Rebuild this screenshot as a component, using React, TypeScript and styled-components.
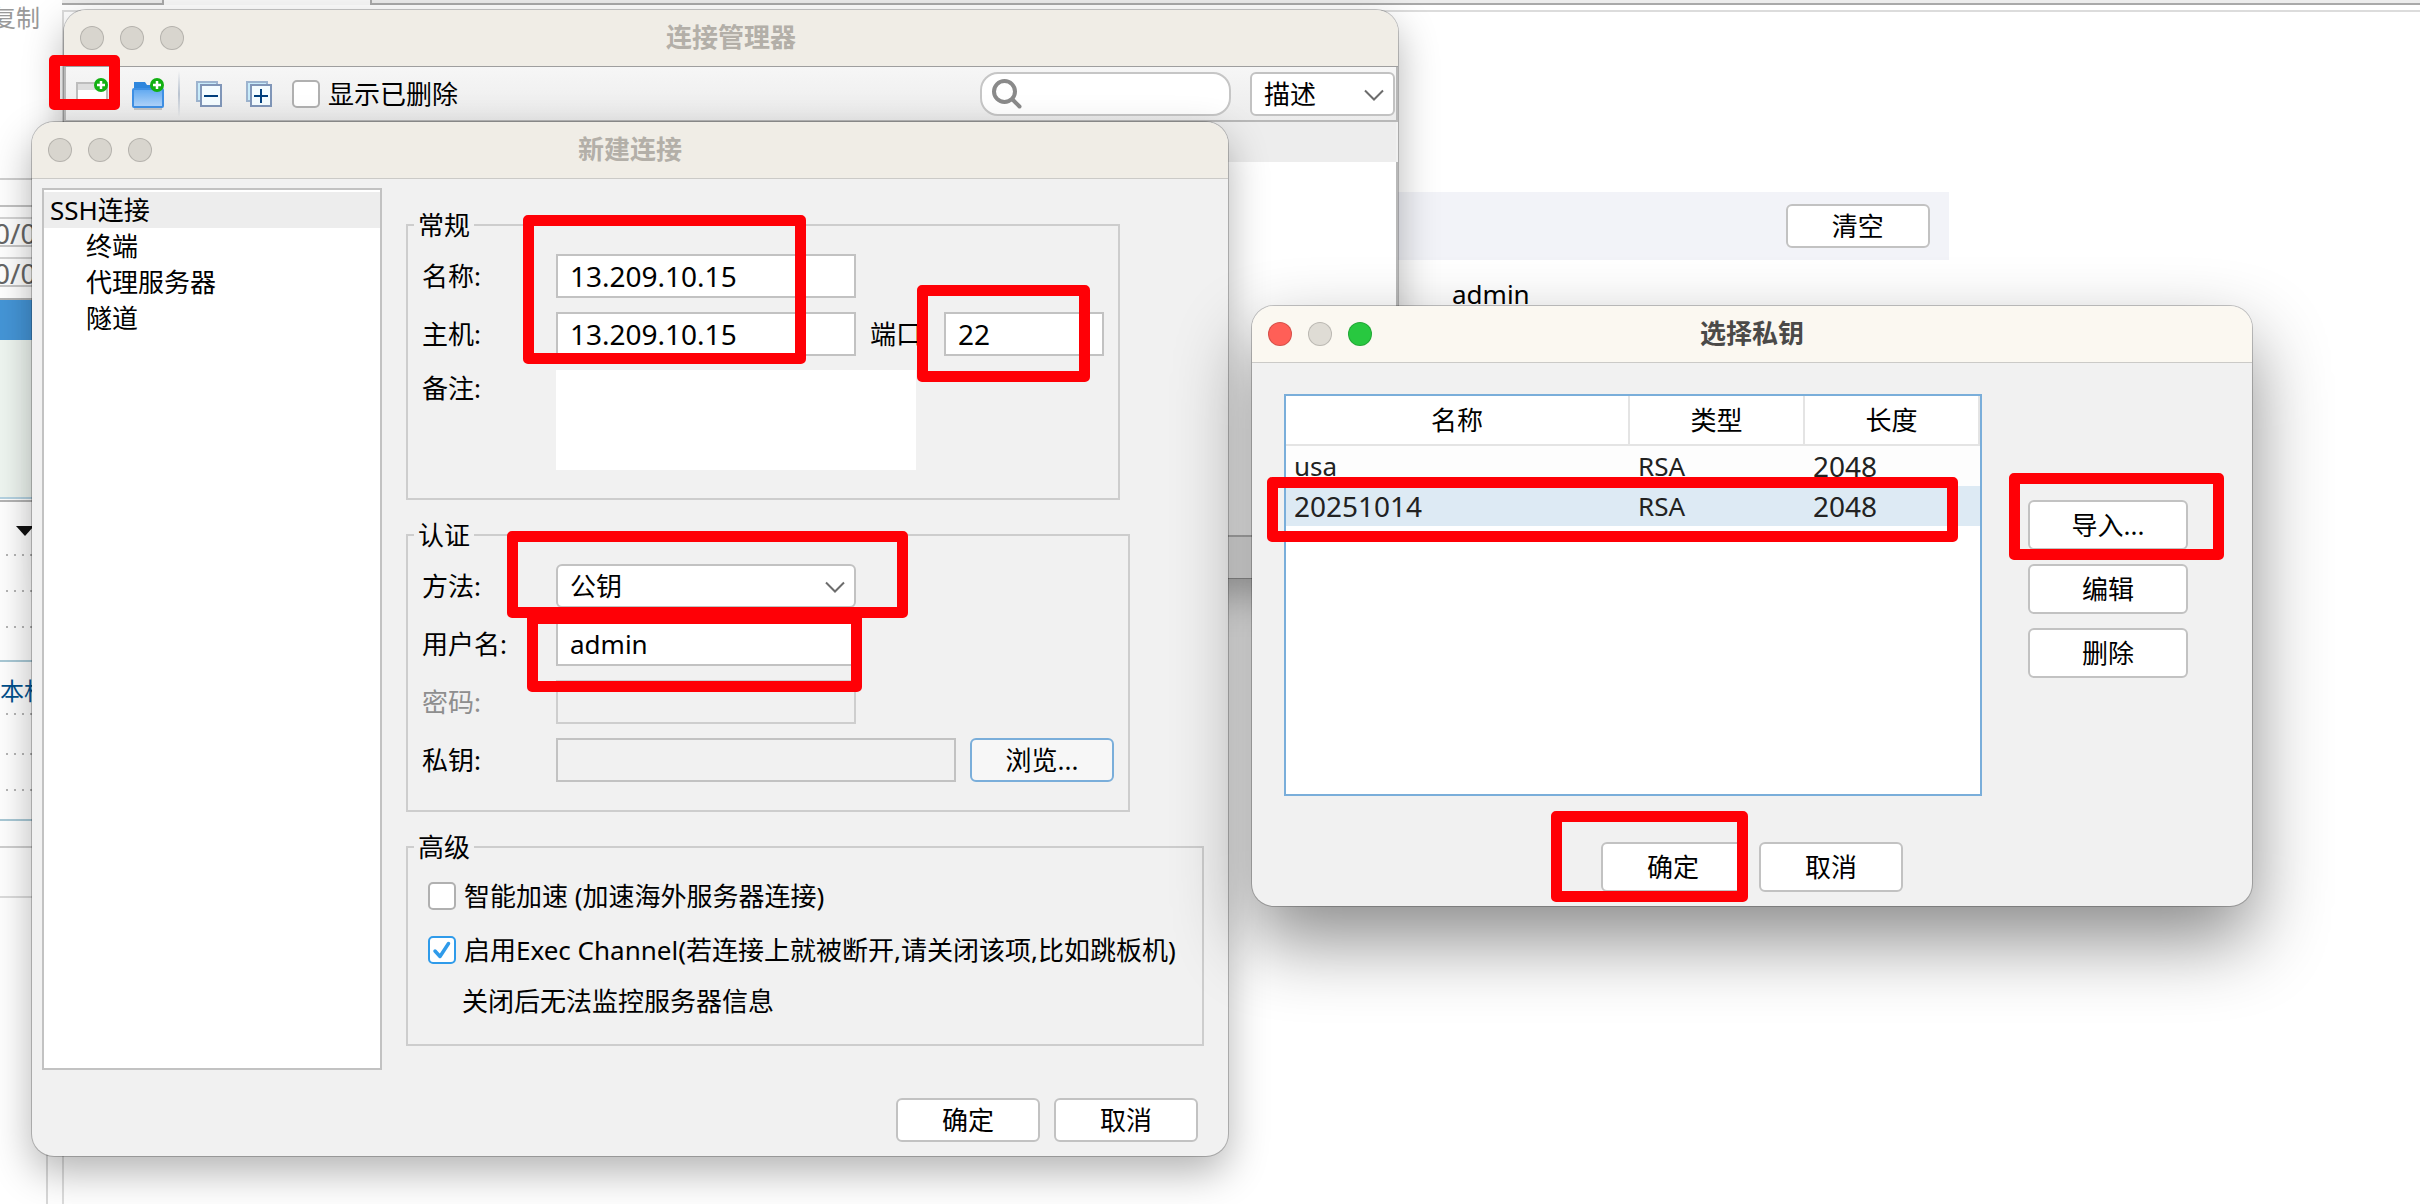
import React, { useId } from 'react';
import styled, { createGlobalStyle, css } from 'styled-components';

const GlobalStyle = createGlobalStyle`
  *, *::before, *::after { box-sizing: border-box; }
  body {
    margin: 0;
    background: #fff;
    color: #000;
    font: 26px/36px "Noto Sans", "Noto Sans CJK SC", sans-serif;
  }
  button, input, select, textarea { font: inherit; color: inherit; margin: 0; }
`;

/* ---------- desktop and the main application behind the dialogs ---------- */

const Desktop = styled.div`
  position: relative;
  display: flex;
  min-height: 100vh;
  overflow: hidden;
`;

const Sidebar = styled.aside`
  display: flex;
  flex-direction: column;
  flex: 0 0 62px;
  overflow: hidden;
  white-space: nowrap;
`;

const CopyLabel = styled.div`
  height: 178px;
  display: flex;
  justify-content: flex-end;
  padding-right: 22px;
  font-size: 24px;
  color: #999;
`;

const Strip = styled.div<{ $h: number; $line?: string; $bg?: string }>`
  flex: none;
  height: ${(p) => p.$h}px;
  background: ${(p) => p.$bg ?? 'transparent'};
  border-bottom: 2px solid ${(p) => p.$line ?? 'transparent'};
`;

const Metric = styled(Strip)`
  font-size: 28px;
  line-height: 28px;
  color: #666;
  text-indent: -6px;
`;

const Dots = styled.div<{ $h: number }>`
  flex: none;
  height: ${(p) => p.$h}px;
  margin-left: 6px;
  background: repeating-linear-gradient(90deg, #b5b5b5 0 2px, transparent 2px 8px) bottom / 100% 2px
    no-repeat;
`;

const Group = styled.div`
  flex: none;
  height: 34px;
  margin-top: 12px;
  line-height: 34px;
  color: #00508c;
  font-size: 24px;
`;

const SplitLine = styled.div`
  flex: 1;
  width: 48px;
  border-right: 2px solid #d8d8d8;
`;

const Main = styled.main`
  display: flex;
  flex-direction: column;
  flex: 1;
  min-width: 0;
`;

const TabStrip = styled.div`
  display: flex;
  height: 5px;
`;

const TabEdge = styled.div<{ $active?: boolean; $w?: number }>`
  flex: ${(p) => (p.$w ? `0 0 ${p.$w}px` : '1')};
  ${(p) =>
    p.$active
      ? css`
          border: solid #a9a9a9;
          border-width: 0 2px;
          background: #f8f8f8;
        `
      : css`
          border-bottom: 2px solid #a9a9a9;
          background: #ececec;
        `}
`;

const Workspace = styled.div`
  flex: 1;
  margin-top: 5px;
  border: solid #dcdcdc;
  border-width: 2px 0 0 2px;
`;

const ResultBar = styled.div`
  display: flex;
  justify-content: flex-end;
  width: 80%;
  margin-top: 180px;
  padding: 12px 19px;
  background: #f2f3f8;
`;

const ResultRow = styled.div`
  padding: 16px 0 0 1388px;
`;

/* ---------- windows ---------- */

const Window = styled.section<{ $x: number; $y: number; $w: number; $active?: boolean }>`
  position: absolute;
  left: ${(p) => p.$x}px;
  top: ${(p) => p.$y}px;
  width: ${(p) => p.$w}px;
  display: flex;
  flex-direction: column;
  overflow: hidden;
  border-radius: 22px;
  background: #f1f1f1;
  box-shadow: ${(p) =>
    p.$active
      ? '0 0 0 1px rgba(0,0,0,.22), 0 34px 76px rgba(0,0,0,.46)'
      : '0 0 0 1px rgba(0,0,0,.22), 0 16px 40px rgba(0,0,0,.3)'};
`;

const Bar = styled.header<{ $active?: boolean; $strong?: boolean }>`
  display: grid;
  grid-template-columns: 1fr auto 1fr;
  align-items: center;
  height: 57px;
  padding: 0 16px;
  background: ${(p) => (p.$active ? '#fbf8f1' : '#f0ede6')};
  border-bottom: 1px solid ${(p) => (p.$strong ? '#9e9e9e' : '#cbcac7')};
`;

const Title = styled.h2<{ $active?: boolean }>`
  margin: 0;
  padding-bottom: 2px;
  font-size: 26px;
  line-height: 36px;
  font-weight: 700;
  color: ${(p) => (p.$active ? '#4b4a48' : '#b3afa8')};
`;

const Lights = styled.div`
  display: flex;
  gap: 16px;
`;

const Light = styled.button<{ $color: string }>`
  width: 24px;
  height: 24px;
  padding: 0;
  border: 1px solid rgba(0, 0, 0, 0.16);
  border-radius: 50%;
  background: ${(p) => p.$color};
`;

function TitleBar({ title, active, strong }: { title: string; active?: boolean; strong?: boolean }) {
  const colors = active ? ['#ff5f57', '#dfdcd5', '#28c840'] : ['#d8d5ce', '#d8d5ce', '#d8d5ce'];
  const names = ['关闭', '最小化', '缩放'];
  return (
    <Bar $active={active} $strong={strong}>
      <Lights>
        {colors.map((c, i) => (
          <Light key={names[i]} type="button" aria-label={names[i]} $color={c} />
        ))}
      </Lights>
      <Title $active={active}>{title}</Title>
    </Bar>
  );
}

/* ---------- shared controls ---------- */

const Button = styled.button<{ $tall?: boolean; $w?: number; $focus?: boolean }>`
  flex: none;
  width: ${(p) => p.$w ?? 144}px;
  height: ${(p) => (p.$tall ? 50 : 44)}px;
  padding: 0;
  line-height: 36px;
  border: 2px solid ${(p) => (p.$focus ? '#7aaeda' : '#c2c2c2')};
  border-radius: 6px;
  background: ${(p) => (p.$focus ? '#f7f7f7' : '#fff')};
`;

const field = css`
  height: 44px;
  padding: 0 12px;
  border: 2px solid #c2c2c2;
  background: #fff;
  outline: none;
`;

const TextField = styled.input<{ $w: number }>`
  ${field}
  width: ${(p) => p.$w}px;
  &:read-only { background: #f1f1f1; }
  &:disabled { background: #f1f1f1; border-color: #cecece; }
`;

const NumericField = styled(TextField)`
  font-size: 28px;
`;

const Notes = styled.textarea`
  display: block;
  width: 360px;
  height: 100px;
  padding: 4px 12px;
  border: 0;
  resize: none;
  background: #fff;
`;

const SelectWrap = styled.span<{ $w: number }>`
  position: relative;
  display: block;
  flex: none;
  width: ${(p) => p.$w}px;
  height: 44px;
`;

const SelectBox = styled.select`
  ${field}
  appearance: none;
  width: 100%;
  border-radius: 6px;
`;

const Chevron = styled.svg`
  position: absolute;
  right: 11px;
  top: 17px;
  pointer-events: none;
`;

function Select({ id, value, width, label }: { id?: string; value: string; width: number; label?: string }) {
  return (
    <SelectWrap $w={width}>
      <SelectBox id={id} aria-label={label} defaultValue={value}>
        <option>{value}</option>
      </SelectBox>
      <Chevron width="20" height="12" viewBox="0 0 20 12" aria-hidden>
        <path d="M1 1.5l9 9 9-9" fill="none" stroke="#6c6c6c" strokeWidth="2" />
      </Chevron>
    </SelectWrap>
  );
}

const CheckLabel = styled.label`
  display: flex;
  align-items: center;
  gap: 8px;
  height: 28px;
  line-height: 28px;
  white-space: nowrap;
`;

const CheckSlot = styled.span`
  display: grid;
  flex: none;
  width: 28px;
  height: 28px;
  > * { grid-area: 1 / 1; }
  svg { pointer-events: none; }
`;

const CheckInput = styled.input`
  appearance: none;
  width: 28px;
  height: 28px;
  border: 2px solid #b0b0b0;
  border-radius: 5px;
  background: #fff;
  &:checked { border-color: #2f9bea; }
  & + svg { visibility: hidden; }
  &:checked + svg { visibility: visible; }
`;

function Check({ text, checked }: { text: string; checked?: boolean }) {
  return (
    <CheckLabel>
      <CheckSlot>
        <CheckInput type="checkbox" defaultChecked={checked} />
        <svg width="28" height="28" viewBox="0 0 28 28" aria-hidden>
          <path
            d="M7 15l5 5.5L20.5 7.5"
            fill="none"
            stroke="#2f9bea"
            strokeWidth="3.5"
            strokeLinecap="round"
            strokeLinejoin="round"
          />
        </svg>
      </CheckSlot>
      {text}
    </CheckLabel>
  );
}

/* ---------- connection manager ---------- */

const Toolbar = styled.div`
  display: flex;
  align-items: center;
  height: 55px;
  padding: 0 1px 0 10px;
  border: solid #b8b8b8;
  border-width: 0 2px 2px;
  background: linear-gradient(#f6f6f6, #ececec);
`;

const IconButton = styled.button<{ $gap: number }>`
  display: flex;
  flex: none;
  margin-right: ${(p) => p.$gap}px;
  padding: 0;
  border: 0;
  background: none;
`;

const Divider = styled.span`
  width: 2px;
  height: 46px;
  margin-right: 16px;
  background: linear-gradient(transparent, #b9c3d0, transparent);
`;

const SearchBox = styled.label`
  display: flex;
  align-items: center;
  width: 251px;
  height: 44px;
  margin: 0 19px 0 auto;
  padding: 0 12px 0 10px;
  border: 2px solid #c6c6c6;
  border-radius: 18px;
  background: #fff;
`;

const SearchInput = styled.input.attrs({ type: 'text' })`
  flex: 1;
  min-width: 0;
  border: 0;
  outline: none;
  background: none;
`;

const ManagerHead = styled.div`
  height: 40px;
  margin: 0 2px;
  background: #ededed;
`;

const ManagerList = styled.div`
  min-height: 375px;
  border: solid #b8b8b8;
  border-width: 0 2px 2px;
  background: #fff;
`;

const ManagerFoot = styled.div`
  height: 41px;
`;

const PlusBadge = () => (
  <>
    <circle cx="25" cy="7" r="7" fill="#12b012" />
    <path d="M25 3v8M21 7h8" stroke="#fff" strokeWidth="2.5" />
  </>
);

const NewIcon = () => (
  <svg width="32" height="32" viewBox="0 0 32 32" aria-hidden>
    <rect x="1" y="5" width="30" height="24" fill="#fff" stroke="#bdbdbd" strokeWidth="2" />
    <rect x="2" y="6" width="28" height="6" fill="#dedede" />
    <PlusBadge />
  </svg>
);

const FolderIcon = () => (
  <svg width="32" height="32" viewBox="0 0 32 32" aria-hidden>
    <defs>
      <linearGradient id="folder" x1="0" y1="0" x2="0" y2="1">
        <stop offset="0" stopColor="#5fa8f0" />
        <stop offset="1" stopColor="#b4d6fb" />
      </linearGradient>
    </defs>
    <rect x="2" y="29" width="28" height="3" fill="#c4c4c4" />
    <path d="M2 12V4h11l2 3h15v5z" fill="#2f86dd" />
    <rect x="1" y="11" width="30" height="18" rx="1" fill="url(#folder)" stroke="#3f90e4" strokeWidth="2" />
    <PlusBadge />
  </svg>
);

const TreeIcon = ({ plus }: { plus?: boolean }) => (
  <svg width="26" height="26" viewBox="0 0 26 26" aria-hidden>
    <rect x="1" y="1" width="20" height="19" fill="#c8ecfb" stroke="#9db4cf" strokeWidth="2" />
    <rect x="5" y="4" width="20" height="21" fill="#f4fcff" stroke="#8096b8" strokeWidth="2" />
    <path d={plus ? 'M8 15h14M15 8v14' : 'M8 15h14'} stroke="#003f7d" strokeWidth="2" />
  </svg>
);

const SearchIcon = () => (
  <svg width="30" height="30" viewBox="0 0 30 30" aria-hidden>
    <circle cx="12.5" cy="12.5" r="10.5" fill="none" stroke="#8a8a8a" strokeWidth="4" />
    <path d="M20.5 20.5l7 7" stroke="#8a8a8a" strokeWidth="4" strokeLinecap="round" />
  </svg>
);

function ManagerWindow() {
  return (
    <Window $x={64} $y={10} $w={1334}>
      <TitleBar title="连接管理器" strong />
      <Toolbar>
        <IconButton type="button" aria-label="新建连接" $gap={24}><NewIcon /></IconButton>
        <IconButton type="button" aria-label="新建文件夹" $gap={14}><FolderIcon /></IconButton>
        <Divider />
        <IconButton type="button" aria-label="全部折叠" $gap={24}><TreeIcon /></IconButton>
        <IconButton type="button" aria-label="全部展开" $gap={20}><TreeIcon plus /></IconButton>
        <Check text="显示已删除" />
        <SearchBox>
          <SearchIcon />
          <SearchInput aria-label="搜索" />
        </SearchBox>
        <Select value="描述" width={145} label="搜索范围" />
      </Toolbar>
      <ManagerHead />
      <ManagerList />
      <ManagerFoot />
    </Window>
  );
}

/* ---------- new connection ---------- */

const DialogBody = styled.div`
  display: flex;
  gap: 24px;
  padding: 9px 24px 0 10px;
`;

const Nav = styled.ul`
  flex: 0 0 340px;
  margin: 0;
  padding: 2px 0 0;
  list-style: none;
  border: 2px solid #c2c2c2;
  background: #fff;
`;

const NavItem = styled.li<{ $child?: boolean }>`
  height: 36px;
  padding-left: ${(p) => (p.$child ? 42 : 6)}px;
  background: ${(p) => (p.$child ? 'transparent' : '#ededed')};
`;

const Form = styled.form`
  display: flex;
  flex: 1;
  flex-direction: column;
  align-items: flex-start;
  gap: 17px;
  padding: 19px 0 24px;
`;

const Fieldset = styled.fieldset<{ $wide?: boolean }>`
  min-width: 0;
  margin: 0;
  padding: ${(p) => (p.$wide ? '17px 14px 32px' : '11px 14px 28px')};
  align-self: ${(p) => (p.$wide ? 'stretch' : 'flex-start')};
  border: 2px solid #cdcdcd;
`;

const Legend = styled.legend`
  margin-left: -8px;
  padding: 0 4px;
`;

const Rows = styled.div<{ $gap: number; $indent?: number }>`
  display: flex;
  flex-direction: column;
  gap: ${(p) => p.$gap}px;
  padding-left: ${(p) => p.$indent ?? 0}px;
`;

const Row = styled.div<{ $top?: boolean }>`
  display: flex;
  align-items: ${(p) => (p.$top ? 'flex-start' : 'center')};
`;

const Label = styled.label<{ $muted?: boolean }>`
  flex: 0 0 134px;
  color: ${(p) => (p.$muted ? '#8e8e8e' : 'inherit')};
`;

const PortLabel = styled.label`
  flex: 0 0 74px;
  margin-left: 14px;
`;

const Browse = styled(Button)`
  margin-left: 14px;
`;

const Hint = styled.p`
  margin: 0 0 0 34px;
  line-height: 22px;
`;

const Footer = styled.footer<{ $center?: boolean }>`
  display: flex;
  gap: 14px;
  justify-content: ${(p) => (p.$center ? 'center' : 'flex-end')};
  padding: ${(p) => (p.$center ? '46px 0 14px' : '28px 30px 14px')};
`;

function NewConnectionWindow() {
  const id = useId();
  return (
    <Window $x={32} $y={122} $w={1196}>
      <TitleBar title="新建连接" />
      <DialogBody>
        <Nav>
          <NavItem>SSH连接</NavItem>
          <NavItem $child>终端</NavItem>
          <NavItem $child>代理服务器</NavItem>
          <NavItem $child>隧道</NavItem>
        </Nav>
        <Form>
          <Fieldset>
            <Legend>常规</Legend>
            <Rows $gap={14}>
              <Row>
                <Label htmlFor={id + 'name'}>名称:</Label>
                <NumericField id={id + 'name'} $w={300} defaultValue="13.209.10.15" />
              </Row>
              <Row>
                <Label htmlFor={id + 'host'}>主机:</Label>
                <NumericField id={id + 'host'} $w={300} defaultValue="13.209.10.15" />
                <PortLabel htmlFor={id + 'port'}>端口:</PortLabel>
                <NumericField id={id + 'port'} $w={160} defaultValue="22" />
              </Row>
              <Row $top>
                <Label htmlFor={id + 'notes'}>备注:</Label>
                <Notes id={id + 'notes'} />
              </Row>
            </Rows>
          </Fieldset>
          <Fieldset>
            <Legend>认证</Legend>
            <Rows $gap={14}>
              <Row>
                <Label htmlFor={id + 'method'}>方法:</Label>
                <Select id={id + 'method'} value="公钥" width={300} />
              </Row>
              <Row>
                <Label htmlFor={id + 'user'}>用户名:</Label>
                <TextField id={id + 'user'} $w={300} defaultValue="admin" />
              </Row>
              <Row>
                <Label htmlFor={id + 'pass'} $muted>密码:</Label>
                <TextField id={id + 'pass'} type="password" $w={300} disabled />
              </Row>
              <Row>
                <Label htmlFor={id + 'key'}>私钥:</Label>
                <TextField id={id + 'key'} $w={400} readOnly />
                <Browse type="button" $focus>浏览...</Browse>
              </Row>
            </Rows>
          </Fieldset>
          <Fieldset $wide>
            <Legend>高级</Legend>
            <Rows $gap={26} $indent={6}>
              <Check text="智能加速 (加速海外服务器连接)" />
              <Check text="启用Exec Channel(若连接上就被断开,请关闭该项,比如跳板机)" checked />
              <Hint>关闭后无法监控服务器信息</Hint>
            </Rows>
          </Fieldset>
        </Form>
      </DialogBody>
      <Footer>
        <Button type="button">确定</Button>
        <Button type="button">取消</Button>
      </Footer>
    </Window>
  );
}

/* ---------- private key picker ---------- */

const KeyBody = styled.div`
  display: flex;
  gap: 46px;
  padding: 31px 64px 0 32px;
`;

const KeyPane = styled.div`
  flex: 1;
  min-height: 402px;
  border: 2px solid #7aaeda;
  background: #fff;
`;

const KeyTable = styled.table`
  width: 100%;
  border-collapse: separate;
  border-spacing: 0;
  table-layout: fixed;
  color: #222;
`;

const Th = styled.th<{ $w?: number }>`
  width: ${(p) => (p.$w ? `${p.$w}px` : 'auto')};
  height: 50px;
  padding: 0;
  font-weight: 400;
  color: #000;
  border: solid #e4e4e4;
  border-width: 0 2px 2px 0;
`;

const Tr = styled.tr<{ $selected?: boolean }>`
  background: ${(p) => (p.$selected ? '#ddeaf4' : '#fdfdfd')};
`;

const Td = styled.td<{ $num?: boolean }>`
  height: 40px;
  padding: 0 0 0 8px;
  font-size: ${(p) => (p.$num ? 28 : 26)}px;
`;

const KeyActions = styled.div`
  display: flex;
  flex-direction: column;
  gap: 14px;
  padding-top: 106px;
`;

const keys = [
  { name: 'usa', type: 'RSA', length: '2048' },
  { name: '20251014', type: 'RSA', length: '2048', selected: true },
];

function KeyWindow() {
  return (
    <Window $x={1252} $y={306} $w={1000} $active>
      <TitleBar title="选择私钥" active />
      <KeyBody>
        <KeyPane>
          <KeyTable>
            <thead>
              <tr>
                <Th>名称</Th>
                <Th $w={175}>类型</Th>
                <Th $w={175}>长度</Th>
              </tr>
            </thead>
            <tbody>
              {keys.map((k) => (
                <Tr key={k.name} $selected={k.selected}>
                  <Td $num={/^\d+$/.test(k.name)}>{k.name}</Td>
                  <Td>{k.type}</Td>
                  <Td $num>{k.length}</Td>
                </Tr>
              ))}
            </tbody>
          </KeyTable>
        </KeyPane>
        <KeyActions>
          <Button type="button" $tall $w={160}>导入...</Button>
          <Button type="button" $tall $w={160}>编辑</Button>
          <Button type="button" $tall $w={160}>删除</Button>
        </KeyActions>
      </KeyBody>
      <Footer $center>
        <Button type="button" $tall>确定</Button>
        <Button type="button" $tall>取消</Button>
      </Footer>
    </Window>
  );
}

/* ---------- red callout frames drawn over the windows ---------- */

const Mark = styled.div<{ $box: number[] }>`
  position: absolute;
  left: ${(p) => p.$box[0]}px;
  top: ${(p) => p.$box[1]}px;
  width: ${(p) => p.$box[2]}px;
  height: ${(p) => p.$box[3]}px;
  border: 11px solid #ff0006;
  border-radius: 5px;
  pointer-events: none;
`;

const marks = [
  [49, 55, 71, 55],
  [523, 215, 283, 149],
  [917, 285, 173, 97],
  [507, 531, 401, 87],
  [527, 613, 335, 79],
  [1267, 477, 691, 65],
  [2009, 473, 215, 87],
  [1551, 811, 197, 91],
];

export default function App() {
  return (
    <>
      <GlobalStyle />
      <Desktop>
        <Sidebar>
          <CopyLabel>复制</CopyLabel>
          <Strip $h={2} $line="#cfcfcf" />
          <Strip $h={27} $line="#c2c2c2" />
          <Strip $h={12} $line="#d4d4d4" />
          <Metric $h={28} $line="#c8c8c8">0/0</Metric>
          <Strip $h={12} $line="#d4d4d4" />
          <Metric $h={28} $line="#c8c8c8">0/0</Metric>
          <Strip $h={13} $line="#b4b4b4" />
          <Strip $h={40} $bg="#4596d8" $line="#4596d8" />
          <Strip $h={159} $bg="#eff6f1" $line="#b5d3e2" />
          <Strip $h={3} $line="#b4b4b4" />
          <svg width="62" height="34" viewBox="0 0 62 34" aria-hidden>
            <path d="M16 24h18l-9 10z" fill="#111" />
          </svg>
          <Dots $h={20} />
          <Dots $h={36} />
          <Dots $h={36} />
          <Strip $h={34} $line="#a9c9d6" />
          <Group>本机</Group>
          <Dots $h={7} />
          <Dots $h={40} />
          <Dots $h={36} />
          <Strip $h={30} $line="#a9c9d6" />
          <Strip $h={27} $line="#cfcfcf" />
          <Strip $h={50} $line="#dcdcdc" />
          <SplitLine />
        </Sidebar>
        <Main>
          <TabStrip>
            <TabEdge $w={100} />
            <TabEdge $active $w={210} />
            <TabEdge />
          </TabStrip>
          <Workspace>
            <ResultBar>
              <Button type="button">清空</Button>
            </ResultBar>
            <ResultRow>admin</ResultRow>
          </Workspace>
        </Main>
        <ManagerWindow />
        <NewConnectionWindow />
        <KeyWindow />
        {marks.map((box) => (
          <Mark key={box.join()} $box={box} />
        ))}
      </Desktop>
    </>
  );
}
